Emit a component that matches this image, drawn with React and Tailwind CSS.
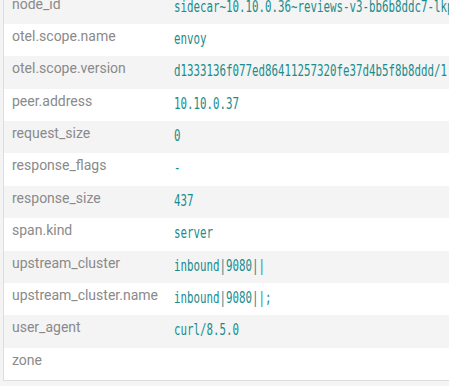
import React from "react";

const rows = [
  ["node_id", "sidecar~10.10.0.36~reviews-v3-bb6b8ddc7-lkpq2.default~default.svc.cluster.local"],
  ["otel.scope.name", "envoy"],
  ["otel.scope.version", "d1333136f077ed86411257320fe37d4b5f8b8ddd/1.30.0-dev/Clean/RELEASE/BoringSSL"],
  ["peer.address", "10.10.0.37"],
  ["request_size", "0"],
  ["response_flags", "-"],
  ["response_size", "437"],
  ["span.kind", "server"],
  ["upstream_cluster", "inbound|9080||"],
  ["upstream_cluster.name", "inbound|9080||;"],
  ["user_agent", "curl/8.5.0"],
  ["zone", ""],
];

export default function App() {
  return (
    <div className="h-[386px] w-[449px] overflow-hidden bg-[#f4f4f4] pl-[3px]">
      <div className="-mt-[8.36px] w-[700px] border-l border-b border-[#dddddd]">
        {rows.map(([k, v], i) => (
          <div
            key={k}
            className={`grid h-[32.36px] grid-cols-[170px_1fr] ${i % 2 === 0 ? "bg-[#f4f4f4]" : "bg-white"}`}
          >
            <div
              className="pl-2 pt-[2px] text-[14px] leading-[20px] text-[#8a8a8a]"
              style={{ fontFamily: "Roboto, 'Liberation Sans', sans-serif" }}
            >
              {k}
            </div>
            <div className="overflow-visible whitespace-nowrap pt-[2px]">
              <span
                className="inline-block origin-left scale-x-[0.72] text-[15px] leading-[20px] text-[#1a8c8c]"
                style={{ fontFamily: "'DejaVu Sans Mono', monospace" }}
              >
                {v}
              </span>
            </div>
          </div>
        ))}
      </div>
    </div>
  );
}
